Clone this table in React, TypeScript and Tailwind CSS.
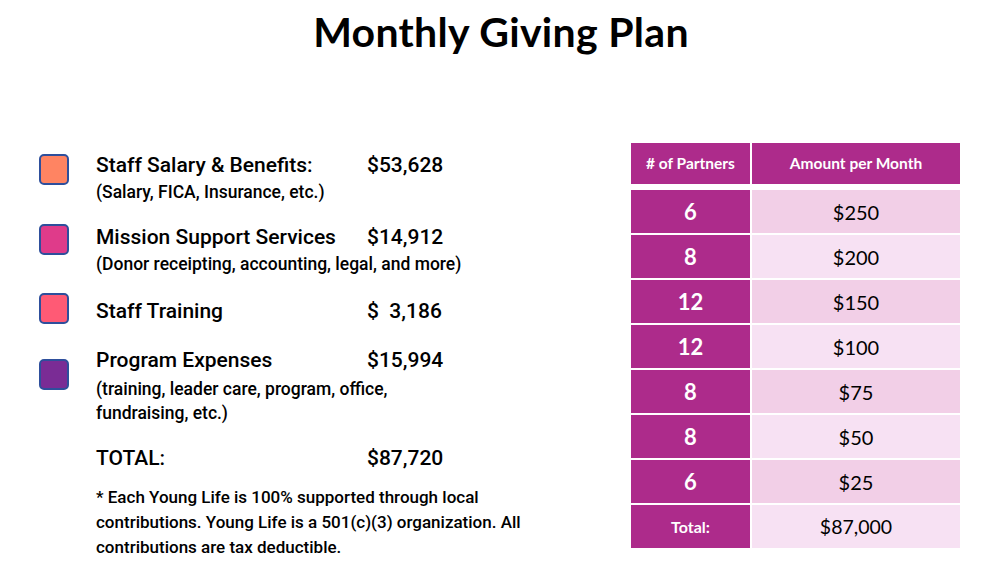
import React from 'react'

const items = [
  { color: 'bg-[#ff8462]', label: 'Staff Salary & Benefits:', amount: '$53,628', sub: ['(Salary, FICA, Insurance, etc.)'], mt: 'mt-0', sq: 'mt-[3px]', subMt: 'mt-[1px]' },
  { color: 'bg-[#df3b8a]', label: 'Mission Support Services', amount: '$14,912', sub: ['(Donor receipting, accounting, legal, and more)'], mt: 'mt-[19px]', sq: 'mt-[1px]', subMt: 'mt-[1px]' },
  { color: 'bg-[#ff5a75]', label: 'Staff Training', amount: '$  3,186', sub: [], mt: 'mt-[21px]', sq: 'mt-[-4px]', subMt: 'mt-0' },
  { color: 'bg-[#7a2c95]', label: 'Program Expenses', amount: '$15,994', sub: ['(training, leader care, program, office,', 'fundraising, etc.)'], mt: 'mt-[21px]', sq: 'mt-[13px]', subMt: 'mt-[3px]' },
]

const rows = [
  ['6', '$250'],
  ['8', '$200'],
  ['12', '$150'],
  ['12', '$100'],
  ['8', '$75'],
  ['8', '$50'],
  ['6', '$25'],
]

const din = { fontFamily: 'Roboto, "Liberation Sans", sans-serif' }
const cal = { fontFamily: 'Lato, "Open Sans", sans-serif' }

export default function App() {
  return (
    <div className="w-[1002px] h-[577px] bg-white overflow-hidden text-black">
      <h1 className="text-center text-[41px] tracking-[0.3px] font-bold leading-[44px] pt-[10px]" style={cal}>
        Monthly Giving Plan
      </h1>

      <div className="flex items-start pl-[39px] mt-[89px]">
        <div className="w-[592px] pt-[8px]" style={din}>
          {items.map((it) => (
            <div key={it.label} className={`flex items-start ${it.mt}`}>
              <div className={`w-[30px] h-[31px] shrink-0 rounded-[5px] border-2 border-[#2e4f9c] ${it.color} ${it.sq}`} />
              <div className="ml-[27px]">
                <div className="grid grid-cols-[271px_auto] text-[21px] leading-[28px] font-medium">
                  <span>{it.label}</span>
                  <span className="whitespace-pre">{it.amount}</span>
                </div>
                <div className={it.subMt}>
                  {it.sub.map((s) => (
                    <div key={s} className="text-[17.5px] leading-[24px] font-medium">{s}</div>
                  ))}
                </div>
              </div>
            </div>
          ))}

          <div className="ml-[57px] mt-[19px] grid grid-cols-[271px_auto] text-[21px] leading-[28px] font-medium">
            <span>TOTAL:</span>
            <span>$87,720</span>
          </div>

          <p className="ml-[57px] mt-[13px] text-[17px] leading-[25px] font-medium">
            * Each Young Life is 100% supported through local
            <br />
            contributions. Young Life is a 501(c)(3) organization. All
            <br />
            contributions are tax deductible.
          </p>
        </div>

        <div className="grid grid-cols-[119px_208px] gap-x-[2px]" style={cal}>
          <div className="h-[41px] bg-[#ad2b8b] text-white font-bold text-[15.5px] flex items-center justify-center">
            # of Partners
          </div>
          <div className="h-[41px] bg-[#ad2b8b] text-white font-bold text-[15.5px] flex items-center justify-center">
            Amount per Month
          </div>
          <div className="col-span-2 h-[6px]" />
          {rows.map(([n, amt], i) => (
            <React.Fragment key={i}>
              <div className="h-[43px] mb-[2px] bg-[#ad2b8b] text-white font-bold text-[22px] flex items-center justify-center">
                {n}
              </div>
              <div
                className={`h-[43px] mb-[2px] text-[20px] flex items-center justify-center ${
                  i % 2 === 0 ? 'bg-[#f2cfe7]' : 'bg-[#f7e1f3]'
                }`}
              >
                {amt}
              </div>
            </React.Fragment>
          ))}
          <div className="h-[43px] bg-[#ad2b8b] text-white font-bold text-[16px] flex items-center justify-center">
            Total:
          </div>
          <div className="h-[43px] bg-[#f7e1f3] text-[19.5px] flex items-center justify-center">$87,000</div>
        </div>
      </div>
    </div>
  )
}
